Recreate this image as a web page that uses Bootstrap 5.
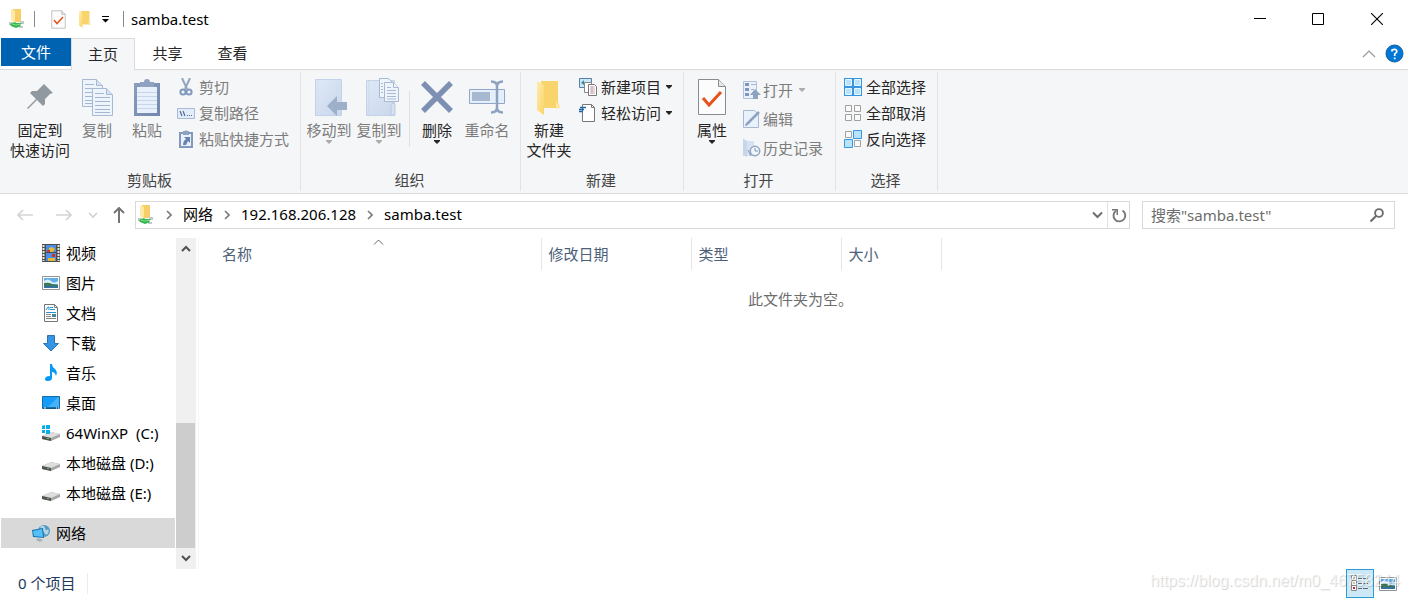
<!DOCTYPE html>
<html lang="zh-CN">
<head>
<meta charset="utf-8">
<meta name="viewport" content="width=device-width, initial-scale=1">
<title>samba.test</title>
<link rel="stylesheet" href="https://cdn.jsdelivr.net/npm/bootstrap@5.3.0/dist/css/bootstrap.min.css">
<style>
  body { font-family: "Noto Sans", "Noto Sans CJK SC", sans-serif; font-size: 15px; line-height: 20px; color: #000; background: #fff; }
  button, input { font: inherit; color: inherit; }
  button { border: 0; padding: 0; background: transparent; }
  a { color: inherit; text-decoration: none; }
  svg { display: block; flex: none; }
  .titlebar { height: 38px; padding-left: 8px; padding-right: 2px; }
  .vr-line { width: 1px; height: 16px; background: #8a8a8a; }
  .customize { padding: 0 10px; }
  .caption { padding-left: 7px; }
  .win-btn { width: 58px; height: 38px; }
  .win-btn:last-child { width: 59px; }
  .tabs { height: 32px; padding-left: 1px; border-bottom: 1px solid #dadbdc; color: #262626; }
  .tab { width: 65px; height: 31px; padding-bottom: 2px; }
  .tab-file { width: 70px; height: 28px; background: #0063b1; color: #fff; }
  .tab-on { width: 64px; height: 32px; background: #f5f6f7; border: 1px solid #dadbdc; border-bottom: 0; }
  .ribbon { height: 124px; background: #f5f6f7; border-bottom: 1px solid #dadbdc; padding: 2px 0 2px 1px; color: #262626; }
  .group { border-right: 1px solid #e2e3e4; }
  .group-name { color: #444; line-height: 20px; padding: 0 2px 1px 0; }
  .tools { padding-left: 3px; }
  .tools-pin { padding-left: 7px; }
  .group-rule { width: 1px; height: 56px; margin: 19px 2px 0 5px; background: #dfe0e1; }
  .big { width: 50px; padding-top: 4px; white-space: nowrap; }
  .big-wide { width: 64px; }
  .big .pic { height: 42px; margin-bottom: 2px; }
  .big:disabled, .small-btn:disabled { color: #7c7c7c; }
  .smalls { padding: 2px 0 0 5px; }
  .small-btn { height: 26px; gap: 4px; white-space: nowrap; }
  .small-btn svg.caret { margin-left: 1px; }
  .tall { padding: 3px 0 0 6px; }
  .tall .small-btn { height: 29px; gap: 2px; }
  .addr { padding: 7px 13px 9px 5px; }
  .box { height: 28px; border: 1px solid #d9d9d9; }
  .crumbs { padding-left: 1px; }
  .crumbs a { padding-bottom: 2px; }
  .crumbs .refresh { padding: 0 2px 0 4px; }
  .nav-btn { width: 39px; height: 28px; }
  .nav-up { width: 32px; }
  .chev { width: 28px; }
  .search { width: 253px; margin-left: 12px; padding: 0 10px 0 8px; }
  .search input { border: 0; outline: 0; padding: 0; min-width: 0; }
  .search input::placeholder { color: #6d6d6d; opacity: 1; }
  .tree { flex: none; width: 175px; padding-left: 1px; }
  .tree a { height: 30px; padding-left: 41px; gap: 6px; white-space: pre; }
  .tree a.root { margin-top: 10px; padding-left: 31px; background: #d9d9d9; }
  .bar { flex: none; width: 20px; margin-left: 1px; background: #f0f0f0; }
  .thumb { height: 125px; width: 19px; background: #cdcdcd; }
  .files { margin-left: 2px; border-left: 1px solid #f5f5f5; }
  .files table { width: 100%; table-layout: fixed; }
  .files th { height: 32px; font-weight: 400; color: #4c607a; padding: 0 0 0 7px; border-right: 1px solid #e5e5e5; position: relative; }
  .files th:first-child { padding-left: 23px; }
  .files th:last-child { border: 0; }
  .files td { padding: 19px 6px 0 0; color: #6d6d6d; text-align: center; }
  .sort { position: absolute; top: 1px; left: 51%; }
  .status { height: 30px; padding: 0 11px 1px 18px; color: #1e395b; gap: 5px; }
  .status .count { padding: 0 12px 1px 0; border-right: 1px solid #ececec; }
  .view-on { width: 28px; height: 29px; border: 1px solid #2a9bd5; background: #cce8f6; }
  .watermark { position: absolute; right: 8px; bottom: 8px; font: 16px/20px "Liberation Sans", sans-serif; color: rgba(255,255,255,.7); text-shadow: 1px 1px 1px rgba(0,0,0,.18); pointer-events: none; }
</style>
</head>
<body>
<svg width="0" height="0" class="position-absolute" aria-hidden="true">
  <defs>
    <linearGradient id="gold" x2="1" y2="1"><stop stop-color="#ffebad"/><stop offset="1" stop-color="#fbd467"/></linearGradient>
    <linearGradient id="pale" x2="1" y2="1"><stop stop-color="#dfe9f7"/><stop offset="1" stop-color="#c9d7eb"/></linearGradient>
    <linearGradient id="clip" x2="1" y2="1"><stop stop-color="#8c9dbc"/><stop offset="1" stop-color="#7287ae"/></linearGradient>
    <symbol id="share" viewBox="0 0 18 20"><path d="M5 0h8v12l1 1H5z" fill="#f7cf68"/><path d="M3 0l4 2v12l-4-3z" fill="#ffe9a6"/><path d="M1 13h4v3H1zM12 12h4v3h-4zM11 17h4v2h-4z" fill="#c0cbcd"/><path d="M2 15l5-2 1 1h6l-2 2 1 1-5 2-5-2z" fill="#35b64c"/><path d="M4 15l4 1 5-1" stroke="#85dc8c" fill="none"/></symbol>
    <symbol id="folder" viewBox="0 0 26 36"><path d="M5 2h17v21l2 6H7z" fill="#f9d36b"/><path d="M20 22l4 7-4 1z" fill="#ffe7a4"/><path d="M1 2l7 4v30l-7-5z" fill="url(#gold)"/></symbol>
    <symbol id="checkdoc" viewBox="0 0 30 38"><path d="M1.500 1.500h20l7 7v28h-27z" fill="#fcfcfc" stroke="#8b8b8b"/><path d="M21.500 1.500v7h7" fill="#e7e7e7" stroke="#8b8b8b"/><path d="M6 20l6 7 12-13" fill="none" stroke="#e8501c" stroke-width="3"/></symbol>
    <symbol id="page" viewBox="0 0 21 28"><path d="M.5.5h14l6 6v21H.5z" fill="#eef4fc" stroke="#a9b9d2"/><path d="M14.500.5v6h6" fill="#d5e0f0" stroke="#a9b9d2"/><path d="M3 5.500h9M3 9.500h15M3 13.500h15M3 17.500h15M3 21.500h15M3 24.500h15" stroke="#a4b7d2"/></symbol>
    <symbol id="caret" viewBox="0 0 6 4"><path d="M0 0h6v1L3 4 0 1z" fill="currentColor"/></symbol>
    <symbol id="right" viewBox="0 0 6 10"><path d="M1 1l4 4-4 4" fill="none" stroke="#7a7a7a" stroke-width="1.600"/></symbol>
    <symbol id="picture" viewBox="0 0 18 14"><path d="M.5.5h17v13H.5z" fill="#fff" stroke="#8f9699"/><path d="M2 2h14v10H2z" fill="#62aee9"/><path d="M2 5q4-3 7 0t7 0v3H2z" fill="#dceffc"/><path d="M2 7q5-1 8 1l6 1v1H2z" fill="#3e7658"/><path d="M2 10h14v2H2z" fill="#35719f"/></symbol>
    <symbol id="drive" viewBox="0 0 18 10"><path d="M0 5l9-4 9 2v3l-9 4-9-2z" fill="#a6a6a6"/><path d="M0 5l9-4 9 2-9 4z" fill="#dedede"/><path d="M0 5l9 2v3L0 8z" fill="#535353"/><path d="M5 7h2v1H5z" fill="#3ed33d"/></symbol>
  </defs>
</svg>

<div class="d-flex flex-column min-vh-100 position-relative overflow-hidden">
  <header class="titlebar d-flex align-items-center">
    <svg width="18" height="20"><use href="#share"/></svg>
    <span class="vr-line ms-2 me-3"></span>
    <button aria-label="属性"><svg width="15" height="19"><use href="#checkdoc"/></svg></button>
    <button class="ms-2 ps-1" aria-label="新建文件夹"><svg width="14" height="18"><use href="#folder"/></svg></button>
    <button class="customize" aria-label="自定义快速访问工具栏"><svg width="7" height="7" viewBox="0 0 7 7"><path d="M0 0h7v1H0zM0 3h7L3.500 6.500z"/></svg></button>
    <span class="vr-line ms-1"></span>
    <span class="caption">samba.test</span>
    <div class="ms-auto d-flex">
      <button class="win-btn d-flex align-items-center justify-content-center" aria-label="最小化"><svg width="12" height="12"><path d="M0 5.500h12" stroke="#000"/></svg></button>
      <button class="win-btn d-flex align-items-center justify-content-center" aria-label="最大化"><svg width="12" height="12"><path d="M.5.5h11v11H.5z" fill="none" stroke="#000"/></svg></button>
      <button class="win-btn d-flex align-items-center justify-content-center" aria-label="关闭"><svg width="12" height="12"><path d="M0 0l12 12M12 0L0 12" stroke="#000" stroke-width="1.100"/></svg></button>
    </div>
  </header>

  <nav class="tabs d-flex">
    <button class="tab-file">文件</button>
    <button class="tab tab-on">主页</button>
    <button class="tab">共享</button>
    <button class="tab">查看</button>
    <div class="ms-auto d-flex align-items-center gap-2 pe-1">
      <button class="pe-0" aria-label="最小化功能区"><svg width="16" height="8"><path d="M2 7l6-6 6 6" fill="none" stroke="#999" stroke-width="1.200"/></svg></button>
      <button aria-label="帮助"><svg width="19" height="19"><circle cx="9.500" cy="9.500" r="8.500" fill="#0078d7" stroke="#145b9b"/><path d="M7 7.500V6q2-1 3.500-.5 2 1 1 2.800L9.700 10v2M9.700 13.500v1.800" fill="none" stroke="#fff" stroke-width="1.700"/></svg></button>
    </div>
  </nav>

  <section class="ribbon d-flex">
    <div class="group d-flex flex-column" style="width:300px">
      <div class="tools-pin d-flex flex-grow-1">
        <button class="big big-wide d-flex flex-column align-items-center"><span class="pic d-flex align-items-center"><svg width="26" height="26"><path d="M17 0l9 9-3 1-5 5v5l-2 2-6-6-9 9-1-1 9-9-6-6 2-2 5 0 5-5z" fill="#8f999f"/></svg></span><span>固定到<br>快速访问</span></button>
        <button class="big d-flex flex-column align-items-center" disabled><span class="pic d-flex align-items-center"><svg width="31" height="37"><use href="#page" width="21" height="28"/><use href="#page" x="10" y="9" width="21" height="28"/></svg></span><span>复制</span></button>
        <button class="big d-flex flex-column align-items-center" disabled><span class="pic d-flex align-items-center"><svg width="26" height="37"><path d="M0 4h26v33H0z" fill="url(#clip)"/><path d="M3 8h20v26H3z" fill="#e8f0fb"/><path d="M3 13.500h20M3 17.500h20M3 21.500h20M3 25.500h20M3 29.500h20" stroke="#c5d5ea"/><path d="M6 3h4a3 3 0 0 1 6 0h4v5H6z" fill="#8fa2c1"/></svg></span><span>粘贴</span></button>
        <div class="smalls d-flex flex-column">
          <button class="small-btn d-flex align-items-center" disabled><svg width="18" height="18"><path d="M5 0l5 11M13 0L8 11" stroke="#91a5c2" stroke-width="2"/><circle cx="6" cy="14" r="2.600" fill="none" stroke="#8298bc" stroke-width="2"/><circle cx="12" cy="14" r="2.600" fill="none" stroke="#8298bc" stroke-width="2"/></svg>剪切</button>
          <button class="small-btn d-flex align-items-center" disabled><svg width="18" height="18"><path d="M.5 4.500h17v10H.5z" fill="#e3edf9" stroke="#a9bbd6"/><path d="M3 7l2 5M6 7l2 5M10 11.500h1M12 11.500h1M14 11.500h1" stroke="#536f9c" stroke-width="1.200"/></svg>复制路径</button>
          <button class="small-btn d-flex align-items-center" disabled><svg width="18" height="18"><path d="M3 3h12v14H3z" fill="#e9f1fb" stroke="#8398bc" stroke-width="2"/><path d="M6 1h2l1-1 1 1h2v4H6z" fill="#8ea2c2"/><path d="M7 7h6v6l-2-2-2 4H6q0-4 3-6z" fill="#6783b0"/></svg>粘贴快捷方式</button>
        </div>
      </div>
      <div class="group-name text-center">剪贴板</div>
    </div>

    <div class="group d-flex flex-column" style="width:220px">
      <div class="tools d-flex flex-grow-1">
        <button class="big d-flex flex-column align-items-center" disabled><span class="pic d-flex align-items-center"><svg width="36" height="37" viewBox="-4 0 36 37"><path d="M.5.5h26v36H.5z" fill="url(#pale)" stroke="#c2d2e8"/><path d="M3 1v35" stroke="#d0deef"/><path d="M12 27l10-10v6h10v8H22v6z" fill="#9eafc9"/></svg></span><span>移动到</span><svg width="6" height="4" opacity=".6"><use href="#caret"/></svg></button>
        <button class="big d-flex flex-column align-items-center" disabled><span class="pic d-flex align-items-center"><svg width="42" height="38" viewBox="-8 0 42 38"><path d="M.5 2.500h28v35H.5z" fill="url(#pale)" stroke="#c2d2e8"/><path d="M3 3v34" stroke="#cbd9ed"/><path d="M25 37V27q2-4 4 0v10z" fill="#d7e2f1" stroke="#b9c9e0"/><g fill="#eef4fc" stroke="#a9b9d2"><path d="M13.500.5h9l5 5v14h-14z"/><path d="M18.500 4.500h9l5 5v14h-14z"/><path d="M27.500 4.500v5h5M21 9.500h4M21 12.500h9M21 15.500h9M21 18.500h9M21 21h9M15 5.500h2M15 8.500h2M15 11.500h2M15 14.500h2"/></g></svg></span><span>复制到</span><svg width="6" height="4" opacity=".6"><use href="#caret"/></svg></button>
        <span class="group-rule"></span>
        <button class="big d-flex flex-column align-items-center"><span class="pic d-flex align-items-center"><svg width="32" height="32"><path d="M2 2l28 28M30 2L2 30" stroke="#7d90b3" stroke-width="5.500"/></svg></span><span>删除</span><svg width="6" height="4"><use href="#caret"/></svg></button>
        <button class="big d-flex flex-column align-items-center" disabled><span class="pic d-flex align-items-center"><svg width="36" height="34"><path d="M.5 9.500h35v14H.5z" fill="#e5effb" stroke="#92a7c7"/><path d="M3 12h18v9H3z" fill="#a8b8d1"/><path d="M22 1.500q6 0 6 5v21q0 5-6 5M34 1.500q-6 0-6 5v21q0 5 6 5" fill="none" stroke="#8da2c1" stroke-width="2.500"/></svg></span><span>重命名</span></button>
      </div>
      <div class="group-name text-center">组织</div>
    </div>

    <div class="group d-flex flex-column" style="width:163px">
      <div class="tools d-flex flex-grow-1">
        <button class="big d-flex flex-column align-items-center"><span class="pic d-flex align-items-center"><svg width="26" height="36"><use href="#folder"/></svg></span><span>新建<br>文件夹</span></button>
        <div class="smalls d-flex flex-column">
          <button class="small-btn d-flex align-items-center"><svg width="18" height="18"><path d="M.5.5h12v9H.5z" fill="#c5e8fb" stroke="#5d7da0"/><path d="M2 5l3-3v5z" fill="#408a8c"/><path d="M5.500 4.500h7v10h-7z" fill="#fff" stroke="#888"/><path d="M9.500 6.500h6l2 2v9h-8z" fill="#fff" stroke="#777"/><path d="M11 9h5M11 11h5M11 13h5M11 15h5" stroke="#e6a5a5"/><path d="M13 8v8" stroke="#9ab0db"/></svg>新建项目<svg class="caret" width="6" height="4"><use href="#caret"/></svg></button>
          <button class="small-btn d-flex align-items-center"><svg width="18" height="18"><path d="M3.500.5h9l3 3v14h-12z" fill="#fff" stroke="#777"/><path d="M12.500.5v3h3" fill="none" stroke="#777"/><path d="M1 3.500h6M0 5.500h5M0 7.500h4" stroke="#2269ad" stroke-width="1.300"/></svg>轻松访问<svg class="caret" width="6" height="4"><use href="#caret"/></svg></button>
        </div>
      </div>
      <div class="group-name text-center">新建</div>
    </div>

    <div class="group d-flex flex-column" style="width:152px">
      <div class="tools d-flex flex-grow-1">
        <button class="big d-flex flex-column align-items-center"><span class="pic d-flex align-items-center"><svg width="30" height="38"><use href="#checkdoc"/></svg></span><span>属性</span><svg width="6" height="4"><use href="#caret"/></svg></button>
        <div class="tall d-flex flex-column">
          <button class="small-btn d-flex align-items-center" disabled><svg width="18" height="18"><path d="M.5.5h13v17H.5z" fill="#e9f1fb" stroke="#b4c3da"/><path d="M2 2h4v3H2zM2 7h4v3H2zM2 12h4v3H2z" fill="#8096ba"/><path d="M8 3.500h5M8 8.500h3M8 13.500h2" stroke="#a7b8d2"/><path d="M7 14l5-6 6 6h-3v4h-5v-4z" fill="#8ea2c2"/></svg>打开<svg class="caret ms-1" width="6" height="4" opacity=".6"><use href="#caret"/></svg></button>
          <button class="small-btn d-flex align-items-center" disabled><svg width="18" height="18"><path d="M.5.5h11l4 4v13H.5z" fill="#e9f1fb" stroke="#a7b9d3"/><path d="M4 14L16 2" stroke="#8da2c2" stroke-width="2.500"/><path d="M2 16l1-3 2 2z" fill="#8095b6"/></svg>编辑</button>
          <button class="small-btn d-flex align-items-center" disabled><svg width="18" height="18"><path d="M0 0l4 2h7v15H0z" fill="#d6e2f2"/><path d="M0 0l4 2v16l-4-2z" fill="#c6d5e9"/><circle cx="12" cy="12" r="4.700" fill="#eff5fd" stroke="#91a4c0" stroke-width="1.500"/><path d="M12 9v3h3M5 11l3 6" stroke="#8397b7" fill="none"/></svg>历史记录</button>
        </div>
      </div>
      <div class="group-name text-center">打开</div>
    </div>

    <div class="group d-flex flex-column" style="width:102px">
      <div class="smalls d-flex flex-grow-1 flex-column ps-2">
        <button class="small-btn d-flex align-items-center"><svg width="18" height="18"><path d="M0 0h18v18H0z" fill="#3696e1"/><path d="M1.500 1.500h6v6h-6zM10.500 1.500h6v6h-6zM1.500 10.500h6v6h-6zM10.500 10.500h6v6h-6z" fill="#b9e2fc" stroke="#e9f7ff"/></svg>全部选择</button>
        <button class="small-btn d-flex align-items-center"><svg width="18" height="18"><path d="M1.500 1.500h6v6h-6zM10.500 1.500h6v6h-6zM1.500 10.500h6v6h-6zM10.500 10.500h6v6h-6z" fill="#fafafa" stroke="#a0a0a0"/></svg>全部取消</button>
        <button class="small-btn d-flex align-items-center"><svg width="18" height="18"><path d="M1.500 1.500h6v6h-6zM10.500 10.500h6v6h-6z" fill="#fafafa" stroke="#a0a0a0"/><path d="M9.500.5h8v8h-8zM.5 9.500h8v8h-8z" fill="#b9e2fc" stroke="#3696e1"/></svg>反向选择</button>
      </div>
      <div class="group-name text-center">选择</div>
    </div>
  </section>

  <div class="addr d-flex">
    <button class="nav-btn d-flex align-items-center justify-content-center" aria-label="后退"><svg width="16" height="12"><path d="M16 6H1M6 1L1 6l5 5" fill="none" stroke="#d3d3d3" stroke-width="1.600"/></svg></button>
    <button class="nav-btn d-flex align-items-center justify-content-center" aria-label="前进"><svg width="16" height="12"><path d="M0 6h15M10 1l5 5-5 5" fill="none" stroke="#d3d3d3" stroke-width="1.600"/></svg></button>
    <button class="d-flex align-items-center px-1" aria-label="最近浏览的位置"><svg width="12" height="6"><path d="M2 1l4 4 4-4" fill="none" stroke="#cfcfcf" stroke-width="1.600"/></svg></button>
    <button class="nav-up d-flex align-items-center justify-content-center" aria-label="上移"><svg width="12" height="16"><path d="M6 16V1M1 6l5-5 5 5" fill="none" stroke="#757575" stroke-width="2"/></svg></button>
    <div class="box crumbs flex-grow-1 d-flex align-items-center">
      <svg width="18" height="20"><use href="#share"/></svg>
      <span class="chev d-flex justify-content-center"><svg width="6" height="10"><use href="#right"/></svg></span>
      <a href="#">网络</a>
      <span class="chev d-flex justify-content-center"><svg width="6" height="10"><use href="#right"/></svg></span>
      <a href="#">192.168.206.128</a>
      <span class="chev d-flex justify-content-center"><svg width="6" height="10"><use href="#right"/></svg></span>
      <a href="#">samba.test</a>
      <button class="ms-auto px-1" aria-label="以前的位置"><svg width="11" height="8"><path d="M1 1.500l4.500 4.500L10 1.500" fill="none" stroke="#6e6e6e" stroke-width="2"/></svg></button>
      <button class="refresh align-self-stretch border-start" aria-label="刷新"><svg width="15" height="15" viewBox="0 0 15 15"><path d="M10.500 2.500a5.900 5.900 0 1 1-6.500.2" fill="none" stroke="#767676" stroke-width="1.900"/><path d="M0 1h6v6H4.500V2.500H0z" fill="#767676"/></svg></button>
    </div>
    <div class="box search d-flex align-items-center">
      <input class="flex-grow-1" type="text" placeholder="搜索&quot;samba.test&quot;" aria-label="搜索">
      <button aria-label="搜索"><svg width="14" height="14"><circle cx="9" cy="5" r="3.900" fill="none" stroke="#6e6e6e" stroke-width="1.900"/><path d="M6 8l-5.500 5.500" stroke="#6e6e6e" stroke-width="2.200"/></svg></button>
    </div>
  </div>

  <main class="d-flex flex-grow-1">
    <nav class="tree d-flex flex-column">
      <a href="#" class="d-flex align-items-center"><svg width="18" height="18"><path d="M0 0h18v18H0z" fill="#4d4d4d"/><path d="M4 1h10v7H4zM4 9h10v8H4z" fill="#4d8ee6"/><path d="M7 4l3-1 3 2-2 3H7zM6 14h7v3H6z" fill="#e4ba32"/><path d="M5 6h3v2H5zM10 10h3v3h-3z" fill="#cc3525"/><path d="M1.500 1v16M16.500 1v16" stroke="#e8e8e8" stroke-width="2" stroke-dasharray="2 1"/></svg>视频</a>
      <a href="#" class="d-flex align-items-center"><svg width="18" height="14"><use href="#picture"/></svg>图片</a>
      <a href="#" class="d-flex align-items-center"><svg width="18" height="18"><path d="M2.500.5h10l3 3v14h-13z" fill="#fff" stroke="#767676"/><path d="M12.500.5v3h3" fill="none" stroke="#777"/><path d="M4 6l2-3h1v3M8 3.500h3M8 5.500h5M4 8.500h10" fill="none" stroke="#2693d1"/><path d="M4 10.500h5M4 12.500h5M4 14.500h10" stroke="#858585"/><path d="M10 10h4v3h-4z" fill="#4688a0"/></svg>文档</a>
      <a href="#" class="d-flex align-items-center"><svg width="18" height="18"><path d="M5.500 1.500h7v8h4L9 17 1.500 9.500h4z" fill="#3694e4" stroke="#2874b8"/></svg>下载</a>
      <a href="#" class="d-flex align-items-center"><svg width="18" height="18"><path d="M8 0h2q0 3 3 5 3 3 1 7-1-4-4-4v6q0 3-4 3-3 0-3-2 0-3 5-3z" fill="#079af4"/></svg>音乐</a>
      <a href="#" class="d-flex align-items-center"><svg width="18" height="14"><path d="M.5.5h17v12H.5z" fill="#149cf8" stroke="#126ba8"/><path d="M6 11L16 1h1v10z" fill="#43b2fb"/><path d="M1 12h16" stroke="#164462"/><path d="M2 12h2M14 12h1M16 12h1" stroke="#fff"/></svg>桌面</a>
      <a href="#" class="d-flex align-items-center"><svg width="18" height="16" viewBox="1 0 18 16"><use href="#drive" x="1" y="6" width="18" height="10"/><path d="M0 1l4-1v4H0zM5 0h4v4H5zM0 5h4v3H0zM5 5h4v4H5z" fill="#08aee9"/></svg>64WinXP  (C:)</a>
      <a href="#" class="d-flex align-items-center"><svg width="18" height="16"><use href="#drive" y="6" width="18" height="10"/></svg>本地磁盘 (D:)</a>
      <a href="#" class="d-flex align-items-center"><svg width="18" height="16"><use href="#drive" y="6" width="18" height="10"/></svg>本地磁盘 (E:)</a>
      <a href="#" class="root d-flex align-items-center"><svg width="18" height="18"><circle cx="12" cy="7" r="6" fill="#559ac2"/><path d="M8 3q4-3 5 1t3 1q2 4-2 6" fill="#b4d5e4"/><path d="M0 6l11-2 1 10-11-1z" fill="#1474b5"/><path d="M1 7l9-2 1 8-9-1z" fill="#54c0f5"/><path d="M6 14l5 2-3 2-4-2z" fill="#a3b3bd"/></svg>网络</a>
    </nav>
    <div class="bar d-flex flex-column" aria-hidden="true">
      <svg width="20" height="21"><path d="M6 13l4-4 4 4" fill="none" stroke="#505050" stroke-width="2"/></svg>
      <span class="flex-grow-1"></span>
      <span class="thumb"></span>
      <svg width="20" height="21"><path d="M6 8l4 4 4-4" fill="none" stroke="#505050" stroke-width="2"/></svg>
    </div>
    <section class="files flex-grow-1">
      <table>
        <colgroup><col style="width:342px"><col style="width:150px"><col style="width:150px"><col style="width:100px"><col></colgroup>
        <thead><tr><th>名称<svg class="sort" width="11" height="6"><path d="M1 5.500l4.500-4.500L10 5.500" fill="none" stroke="#666"/></svg></th><th>修改日期</th><th>类型</th><th>大小</th><th></th></tr></thead>
        <tbody><tr><td colspan="5">此文件夹为空。</td></tr></tbody>
      </table>
    </section>
  </main>

  <footer class="status d-flex align-items-center">
    <span class="count">0 个项目</span>
    <button class="view-on ms-auto d-flex align-items-center justify-content-center" aria-label="详细信息"><svg width="18" height="17"><path d="M.5.5h5v5h-5zM.5 5.500h5v5h-5zM.5 10.500h5v5h-5z" fill="#fff" stroke="#888"/><path d="M2 3h2M2 8h2" stroke="#987"/><path d="M2 12h2v2H2z" fill="#c22"/><path d="M7 3.500h4M12 3.500h5M7 8.500h4M12 8.500h5M7 13.500h4M12 13.500h5" stroke="#666"/></svg></button>
    <button aria-label="大缩略图"><svg width="18" height="14"><use href="#picture"/></svg></button>
  </footer>
  <div class="watermark">https://blog.csdn.net/m0_46758244</div>
</div>
<script src="https://cdn.jsdelivr.net/npm/bootstrap@5.3.0/dist/js/bootstrap.bundle.min.js"></script>
</body>
</html>
